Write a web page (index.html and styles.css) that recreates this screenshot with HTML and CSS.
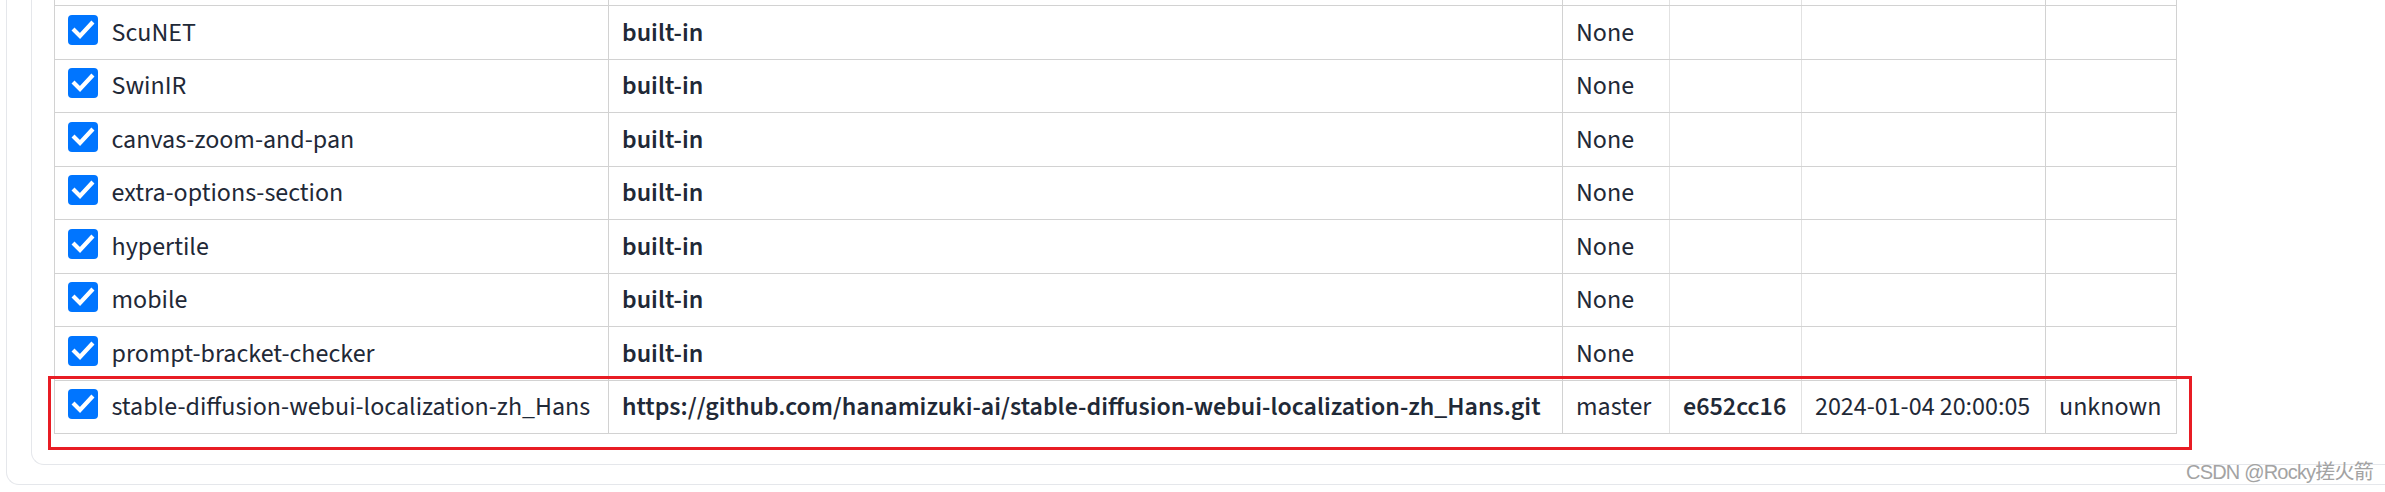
FILE: index.html
```html
<!DOCTYPE html>
<html lang="en">
<head>
<meta charset="utf-8">
<title>Extensions</title>
<link rel="stylesheet" href="styles.css">
</head>
<body>
<div class="outer">
  <div class="inner">
    <table class="ext">
      <colgroup>
        <col class="w-name"><col class="w-url"><col class="w-branch"><col class="w-commit"><col class="w-date"><col class="w-ver">
      </colgroup>
      <tbody>
        <tr class="partial">
          <td></td><td></td><td class="c3"></td><td class="c4"></td><td></td><td></td>
        </tr>
        <tr>
          <td class="nc"><div class="name"><span class="cb"><svg viewBox="0 0 30 30"><polyline points="6.5,15.5 12,21 23.5,8.5"/></svg></span><span>ScuNET</span></div></td>
          <td class="b">built-in</td><td class="c3">None</td><td class="c4"></td><td></td><td></td>
        </tr>
        <tr>
          <td class="nc"><div class="name"><span class="cb"><svg viewBox="0 0 30 30"><polyline points="6.5,15.5 12,21 23.5,8.5"/></svg></span><span>SwinIR</span></div></td>
          <td class="b">built-in</td><td class="c3">None</td><td class="c4"></td><td></td><td></td>
        </tr>
        <tr>
          <td class="nc"><div class="name"><span class="cb"><svg viewBox="0 0 30 30"><polyline points="6.5,15.5 12,21 23.5,8.5"/></svg></span><span>canvas-zoom-and-pan</span></div></td>
          <td class="b">built-in</td><td class="c3">None</td><td class="c4"></td><td></td><td></td>
        </tr>
        <tr>
          <td class="nc"><div class="name"><span class="cb"><svg viewBox="0 0 30 30"><polyline points="6.5,15.5 12,21 23.5,8.5"/></svg></span><span>extra-options-section</span></div></td>
          <td class="b">built-in</td><td class="c3">None</td><td class="c4"></td><td></td><td></td>
        </tr>
        <tr>
          <td class="nc"><div class="name"><span class="cb"><svg viewBox="0 0 30 30"><polyline points="6.5,15.5 12,21 23.5,8.5"/></svg></span><span>hypertile</span></div></td>
          <td class="b">built-in</td><td class="c3">None</td><td class="c4"></td><td></td><td></td>
        </tr>
        <tr>
          <td class="nc"><div class="name"><span class="cb"><svg viewBox="0 0 30 30"><polyline points="6.5,15.5 12,21 23.5,8.5"/></svg></span><span>mobile</span></div></td>
          <td class="b">built-in</td><td class="c3">None</td><td class="c4"></td><td></td><td></td>
        </tr>
        <tr>
          <td class="nc"><div class="name"><span class="cb"><svg viewBox="0 0 30 30"><polyline points="6.5,15.5 12,21 23.5,8.5"/></svg></span><span>prompt-bracket-checker</span></div></td>
          <td class="b">built-in</td><td class="c3">None</td><td class="c4"></td><td></td><td></td>
        </tr>
        <tr>
          <td class="nc"><div class="name"><span class="cb"><svg viewBox="0 0 30 30"><polyline points="6.5,15.5 12,21 23.5,8.5"/></svg></span><span>stable-diffusion-webui-localization-zh_Hans</span></div></td>
          <td class="b">https://github.com/hanamizuki-ai/stable-diffusion-webui-localization-zh_Hans.git</td>
          <td class="c3">master</td><td class="c4 b">e652cc16</td><td>2024-01-04 20:00:05</td><td>unknown</td>
        </tr>
      </tbody>
    </table>
  </div>
</div>
<div class="highlight"></div>
<div class="watermark">CSDN @Rocky搓火箭</div>
</body>
</html>
```
FILE: styles.css
```css
html, body {
  margin: 0;
  padding: 0;
  background: #ffffff;
}
body {
  width: 2385px;
  height: 492px;
  overflow: hidden;
  font-family: "Source Sans 3", "Source Sans Pro", Lato, "Noto Sans", sans-serif;
  color: #1f2937;
}
.outer {
  box-sizing: border-box;
  margin: -100px 0 0 6px;
  width: 2379px;
  border: 1px solid #e5e7eb;
  border-right: 0;
  border-radius: 13px 0 0 13px;
  padding: 20px 0 19px 24px;
  background: #fff;
}
.inner {
  border: 1px solid #e5e7eb;
  border-right: 0;
  border-radius: 13px 0 0 13px;
  padding: 29.5px 0 30px 22px;
  background: #fff;
}
.ext {
  border-collapse: collapse;
  table-layout: fixed;
  width: 2122px;
  font-size: 26px;
}
.w-name { width: 554px; }
.w-url { width: 954px; }
.w-branch { width: 107px; }
.w-commit { width: 132px; }
.w-date { width: 244px; }
.w-ver { width: 131px; }
.ext tr { height: 53.5px; }
.ext td {
  border: 1px solid #d2d2d2;
  padding: 0 13px;
  vertical-align: middle;
  white-space: nowrap;
  overflow: hidden;
}
.ext td.nc { padding-left: 12.5px; }
.ext td.c3, .ext td.c4 { border-right-color: #e2e2e2; }
.ext td.b { font-weight: 600; }
.name {
  display: flex;
  align-items: center;
  gap: 14px;
}
.cb {
  flex: none;
  width: 30px;
  height: 30px;
  margin-bottom: 5px;
  border-radius: 4px;
  background: #0075ff;
  display: flex;
}
.cb svg {
  width: 30px;
  height: 30px;
  fill: none;
  stroke: #fff;
  stroke-width: 4.2;
  stroke-linecap: square;
  stroke-linejoin: miter;
}
.highlight {
  position: absolute;
  left: 48px;
  top: 376px;
  width: 2144px;
  height: 74px;
  box-sizing: border-box;
  border: 3px solid #e81c24;
}
.watermark {
  position: absolute;
  left: 2186px;
  top: 460px;
  font-family: "Liberation Sans", "Noto Sans CJK SC", sans-serif;
  font-size: 20px;
  letter-spacing: -0.8px;
  line-height: 24px;
  color: #a3a3a3;
  white-space: nowrap;
}
```
